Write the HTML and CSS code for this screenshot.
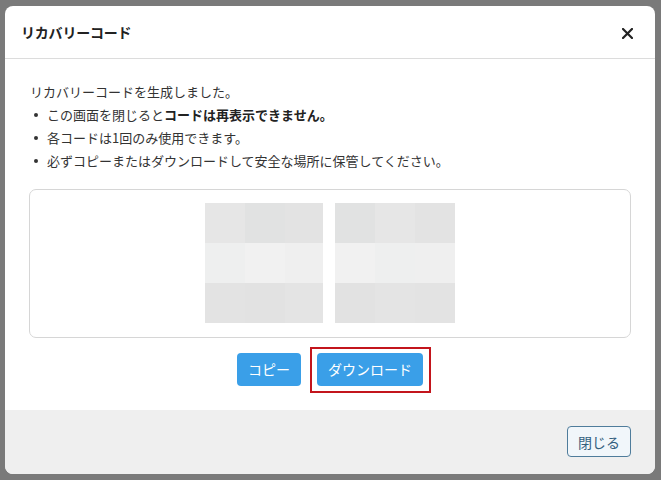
FILE: index.html
```html
<!DOCTYPE html>
<html lang="ja">
<head>
<meta charset="utf-8">
<title>リカバリーコード</title>
<link rel="stylesheet" href="styles.css">
</head>
<body>
<div class="backdrop">
  <div class="modal">
    <div class="modal-header">
      <h2 class="modal-title">リカバリーコード</h2>
      <button class="close-x" aria-label="閉じる">
        <svg width="11" height="11" viewBox="0 0 11 11"><path d="M1 1L10 10M10 1L1 10" stroke="#222" stroke-width="2.2" stroke-linecap="square"/></svg>
      </button>
    </div>
    <div class="modal-body">
      <p class="lead">リカバリーコードを生成しました。</p>
      <ul class="notes">
        <li>この画面を閉じると<strong>コードは再表示できません。</strong></li>
        <li>各コードは1回のみ使用できます。</li>
        <li>必ずコピーまたはダウンロードして安全な場所に保管してください。</li>
      </ul>
      <div class="code-box">
        <div class="blur blur-a">
          <span class="c c1"></span><span class="c c2"></span><span class="c c3"></span>
          <span class="c c4"></span><span class="c c5"></span><span class="c c6"></span>
          <span class="c c7"></span><span class="c c8"></span><span class="c c9"></span>
        </div>
        <div class="blur blur-b">
          <span class="c c2"></span><span class="c c1"></span><span class="c c3"></span>
          <span class="c c5"></span><span class="c c4"></span><span class="c c6"></span>
          <span class="c c8"></span><span class="c c9"></span><span class="c c7"></span>
        </div>
      </div>
      <div class="actions">
        <button class="btn-primary">コピー</button>
        <button class="btn-primary highlighted">ダウンロード</button>
      </div>
    </div>
    <div class="modal-footer">
      <button class="btn-outline">閉じる</button>
    </div>
  </div>
</div>
</body>
</html>
```
FILE: styles.css
```css
* { box-sizing: border-box; }
html, body {
  margin: 0;
  padding: 0;
  width: 661px;
  height: 480px;
  overflow: hidden;
}
body {
  background: #7a7a7a;
  font-family: "Noto Sans CJK JP", "Noto Sans", sans-serif;
  color: #333;
}
.backdrop {
  padding: 6px 6px 6px 5px;
}
.modal {
  width: 650px;
  height: 468px;
  background: #fff;
  border-radius: 8px;
  overflow: hidden;
  display: flex;
  flex-direction: column;
}
.modal-header {
  height: 53px;
  border-bottom: 1px solid #dcdcdc;
  display: flex;
  align-items: center;
  justify-content: space-between;
  padding: 0 22px 0 16px;
}
.modal-title {
  margin: 0;
  font-size: 14px;
  font-weight: 700;
  color: #222;
  letter-spacing: -0.2px;
}
.close-x {
  border: 0;
  background: none;
  padding: 0;
  width: 11px;
  height: 11px;
  display: flex;
  margin-top: 2px;
}
.modal-body {
  padding: 21px 24px 24px;
  font-size: 13px;
  line-height: 23px;
  flex: 1;
}
.lead {
  margin: 0 1px;
}
.notes {
  margin: 0;
  padding: 0;
  list-style: none;
}
.notes li {
  position: relative;
  padding-left: 18px;
}
.notes li::before {
  content: "";
  position: absolute;
  left: 5px;
  top: 10px;
  width: 4px;
  height: 4px;
  border-radius: 50%;
  background: #333;
}
.notes strong {
  font-weight: 700;
  color: #222;
}
.code-box {
  margin-top: 17px;
  border: 1px solid #d6d6d6;
  border-radius: 7px;
  padding: 13px 0 14px;
  display: flex;
  justify-content: center;
  gap: 12px;
}
.blur {
  display: grid;
  grid-template-rows: repeat(3, 40px);
  grid-template-columns: 40px 40px 1fr;
  height: 120px;
}
.blur-a { width: 118px; }
.blur-b { width: 120px; }
.c1 { background: #e6e6e6; }
.c2 { background: #e1e2e2; }
.c3 { background: #e3e3e3; }
.c4 { background: #eeefef; }
.c5 { background: #f1f1f1; }
.c6 { background: #efefef; }
.c7 { background: #e3e3e3; }
.c8 { background: #e2e2e2; }
.c9 { background: #e4e4e4; }
.actions {
  margin-top: 15px;
  display: flex;
  justify-content: center;
  gap: 16px;
}
.btn-primary {
  height: 33px;
  padding: 0 11px;
  border: 0;
  border-radius: 4px;
  background: #3a9fe8;
  color: #fff;
  font-family: inherit;
  font-size: 14px;
  line-height: 33px;
}
.highlighted {
  position: relative;
}
.highlighted::after {
  content: "";
  position: absolute;
  left: -7px;
  right: -8px;
  top: -6px;
  bottom: -7px;
  border: 2px solid #c3151c;
  pointer-events: none;
}
.modal-footer {
  height: 64px;
  background: #efefef;
  display: flex;
  justify-content: flex-end;
  align-items: flex-start;
  padding: 16px 24px 0;
}
.btn-outline {
  height: 31px;
  width: 64px;
  border: 1px solid #4f7c9b;
  border-radius: 4px;
  background: #f1f6fa;
  color: #345f7e;
  font-family: inherit;
  font-size: 14px;
  padding: 0;
}
```
